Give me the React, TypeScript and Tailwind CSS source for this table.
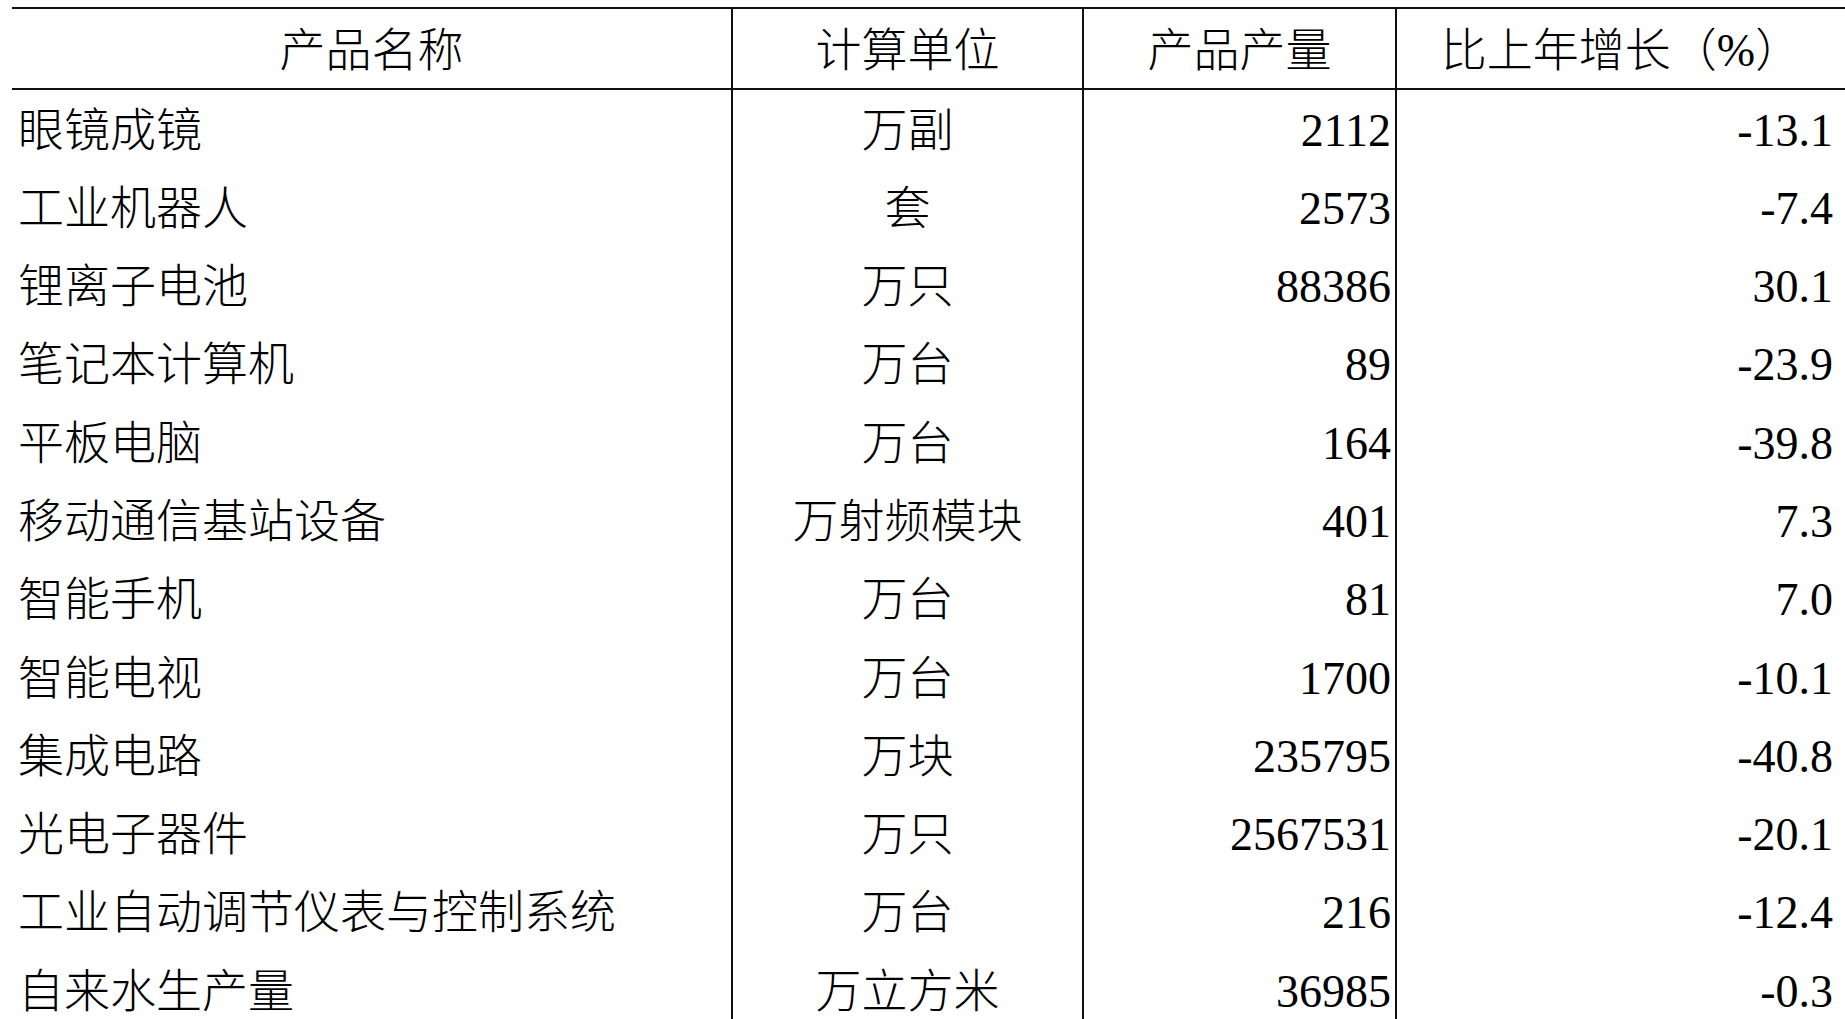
import React from "react";

const rows: [string, string, string, string][] = [
  ["眼镜成镜", "万副", "2112", "-13.1"],
  ["工业机器人", "套", "2573", "-7.4"],
  ["锂离子电池", "万只", "88386", "30.1"],
  ["笔记本计算机", "万台", "89", "-23.9"],
  ["平板电脑", "万台", "164", "-39.8"],
  ["移动通信基站设备", "万射频模块", "401", "7.3"],
  ["智能手机", "万台", "81", "7.0"],
  ["智能电视", "万台", "1700", "-10.1"],
  ["集成电路", "万块", "235795", "-40.8"],
  ["光电子器件", "万只", "2567531", "-20.1"],
  ["工业自动调节仪表与控制系统", "万台", "216", "-12.4"],
  ["自来水生产量", "万立方米", "36985", "-0.3"],
];

export default function App() {
  return (
    <div
      className="h-[1019px] w-full overflow-hidden bg-white text-black pl-[12px]"
      style={{ fontFamily: '"Liberation Serif", "Noto Sans CJK SC", serif' }}
    >
      <div className="mt-[7px] border-t-2 border-[#111] h-[1012px] flex flex-col text-[46px] font-light">
        <div className="grid grid-cols-[721px_351px_313px_1fr] border-b-2 border-[#111] h-[81px] shrink-0">
          <div className="border-r-2 border-[#111] text-center leading-[75px] pt-[4px] whitespace-nowrap">产品名称</div>
          <div className="border-r-2 border-[#111] text-center leading-[75px] pt-[4px] whitespace-nowrap">计算单位</div>
          <div className="border-r-2 border-[#111] text-center leading-[75px] pt-[4px] whitespace-nowrap">产品产量</div>
          <div className="text-center leading-[75px] pt-[4px] whitespace-nowrap">比上年增长（%）</div>
        </div>
        <div className="grid grid-cols-[721px_351px_313px_1fr] flex-1">
          <div className="border-r-2 border-[#111] flex flex-col">
            {rows.map((r) => (
              <div key={r[0]} className="h-[78.3px] shrink-0 leading-[74.8px] pt-[3.5px] pl-[6px] whitespace-nowrap">
                {r[0]}
              </div>
            ))}
          </div>
          <div className="border-r-2 border-[#111] flex flex-col">
            {rows.map((r) => (
              <div key={r[0]} className="h-[78.3px] shrink-0 leading-[74.8px] pt-[3.5px] text-center whitespace-nowrap">
                {r[1]}
              </div>
            ))}
          </div>
          <div className="border-r-2 border-[#111] flex flex-col">
            {rows.map((r) => (
              <div key={r[0]} className="h-[78.3px] shrink-0 leading-[74.8px] pt-[3.5px] text-right pr-[4px] whitespace-nowrap">
                {r[2]}
              </div>
            ))}
          </div>
          <div className="flex flex-col">
            {rows.map((r) => (
              <div key={r[0]} className="h-[78.3px] shrink-0 leading-[74.8px] pt-[3.5px] text-right pr-[12px] whitespace-nowrap">
                {r[3]}
              </div>
            ))}
          </div>
        </div>
      </div>
    </div>
  );
}
